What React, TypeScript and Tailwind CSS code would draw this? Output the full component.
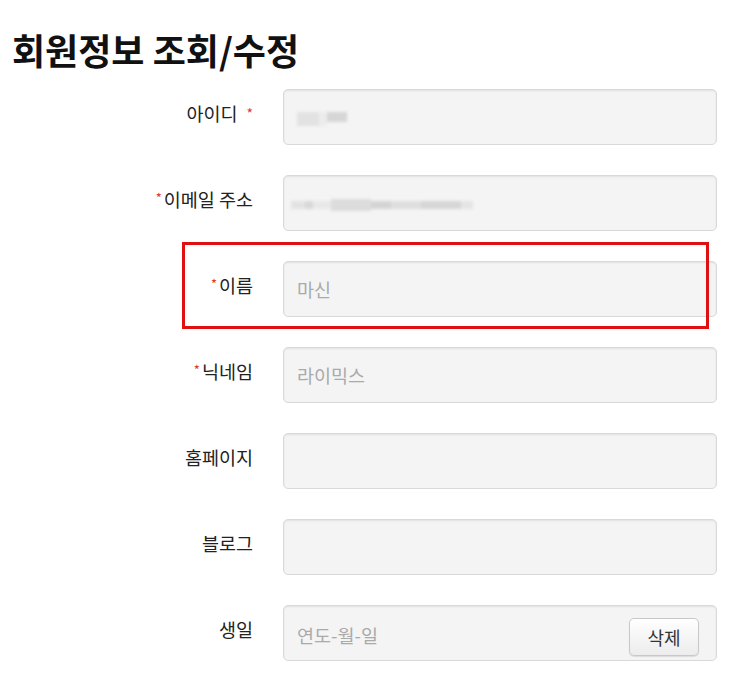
import React from "react";

const font = { fontFamily: '"Noto Sans CJK KR", "Noto Sans", sans-serif' };

function Label({ text, star }: { text: string; star?: "before" | "after" }) {
  return (
    <div className="w-[253px] shrink-0 flex justify-end items-center pb-[6px] text-[18.5px] text-[#222]">
      {star === "before" && <span className="text-[#e0392b] text-[13px] mr-[2px] -mt-[5px]">*</span>}
      <span>{text}</span>
      {star === "after" && <span className="text-[#e0392b] text-[14px] ml-[9px] -mt-[2px]">*</span>}
    </div>
  );
}

function Field({ children }: { children?: React.ReactNode }) {
  return (
    <div className="relative ml-[30px] w-[434px] h-[56px] rounded-[5px] border border-[#d9d9d9] bg-[#f4f4f4] shadow-[inset_0_1px_2px_rgba(0,0,0,0.08)] flex items-center px-[13px] text-[18.5px] text-[#aaa]">
      {children}
    </div>
  );
}

export default function App() {
  return (
    <div className="bg-white w-[735px] h-[681px] overflow-hidden" style={font}>
      <h1 className="pl-[12px] pt-[24px] text-[36px] font-bold leading-[50px] text-[#111]">
        회원정보 조회/수정
      </h1>
      <div className="mt-[15px] flex flex-col gap-[30px]">
        <div className="flex items-center">
          <Label text="아이디" star="after" />
          <Field>
            <div className="flex items-center blur-[1.5px] mt-[4px]">
              <div className="w-[22px] h-[14px] bg-[#e2e2e2]" />
              <div className="w-[8px] h-[14px] bg-[#ececec]" />
              <div className="w-[20px] h-[10px] bg-[#d6d6d6] -mt-[4px]" />
            </div>
          </Field>
        </div>
        <div className="flex items-center">
          <Label text="이메일 주소" star="before" />
          <Field>
            <div className="flex items-center blur-[1.5px] -ml-[6px] mt-[4px]">
              <div className="w-[14px] h-[8px] bg-[#e2e2e2]" />
              <div className="w-[8px] h-[8px] bg-[#d8d8d8]" />
              <div className="w-[18px] h-[8px] bg-[#e8e8e8]" />
              <div className="w-[40px] h-[12px] bg-[#dcdcdc]" />
              <div className="w-[20px] h-[8px] bg-[#d4d4d4]" />
              <div className="w-[30px] h-[8px] bg-[#dedede]" />
              <div className="w-[40px] h-[8px] bg-[#d6d6d6]" />
              <div className="w-[12px] h-[8px] bg-[#e4e4e4]" />
            </div>
          </Field>
        </div>
        <div className="relative flex items-center">
          <div className="absolute left-[182px] top-[-19px] w-[527px] h-[87px] border-[3px] border-[#e01010] pointer-events-none z-10" />
          <Label text="이름" star="before" />
          <Field><span className="mt-[2px]">마신</span></Field>
        </div>
        <div className="flex items-center">
          <Label text="닉네임" star="before" />
          <Field><span className="mt-[2px]">라이믹스</span></Field>
        </div>
        <div className="flex items-center">
          <Label text="홈페이지" />
          <Field />
        </div>
        <div className="flex items-center">
          <Label text="블로그" />
          <Field />
        </div>
        <div className="flex items-center">
          <Label text="생일" />
          <Field>
            <span className="mt-[6px]">연도-월-일</span>
            <button className="ml-auto mr-[4px] mt-[8px] w-[70px] h-[38px] rounded-[5px] border border-[#c8c8c8] bg-gradient-to-b from-white to-[#ececec] shadow-[0_1px_1px_rgba(0,0,0,0.1)] text-[18px] text-[#333]">
              삭제
            </button>
          </Field>
        </div>
      </div>
    </div>
  );
}
